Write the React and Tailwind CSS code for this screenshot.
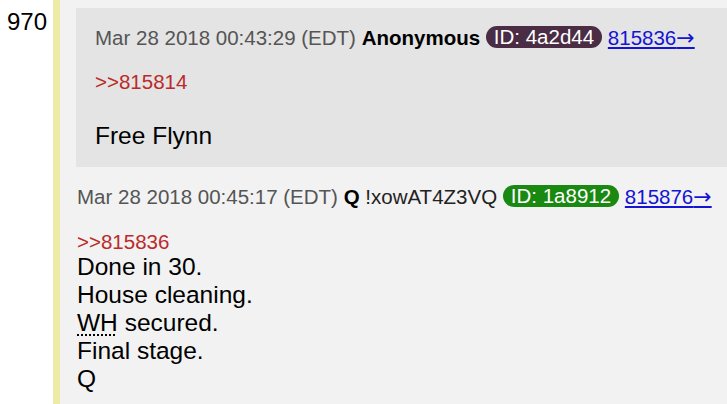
import React from 'react';

const Badge = ({ id }) => (
  <span
    className="inline-block rounded-full px-[8px] leading-[22px] text-white align-[1px]"
    style={{ backgroundColor: `#${id}` }}
  >
    ID: {id}
  </span>
);

const PostHeader = ({ date, name, trip, id, link }) => (
  <div className="text-[20.5px] leading-[23px] text-[#555555] whitespace-nowrap">
    {date}{' '}
    <span className="font-bold text-black">{name}</span>
    {trip && <span className="text-[#222222]"> {trip}</span>}{' '}
    <Badge id={id} />{' '}
    <a href="#" className="text-[#1414d2] underline">
      {link}
      <span className="font-['DejaVu_Sans',sans-serif] text-[22px]">→</span>
    </a>
  </div>
);

const Quote = ({ n }) => (
  <div className="text-[20.5px] leading-[23px] text-[#bb2a2a]">&gt;&gt;{n}</div>
);

export default function App() {
  return (
    <div className="w-[727px] h-[404px] overflow-hidden bg-white font-['Liberation_Sans',Arial,sans-serif] flex">
      {/* post number */}
      <div className="w-[53px] shrink-0 pl-[7px] pt-[8px] text-[24px] leading-[28px] text-black">970</div>
      <div className="w-[7px] shrink-0 bg-[#eeeba8]" />

      <div className="flex-1 bg-[#f2f2f2] pl-[16px] pt-[8px] min-w-0">
        {/* replied-to post */}
        <div className="bg-[#e4e4e4] pl-[19px] pt-[18px] pb-[17px]">
          <PostHeader date="Mar 28 2018 00:43:29 (EDT)" name="Anonymous" id="4a2d44" link="815836" />
          <div className="mt-[21px]">
            <Quote n="815814" />
          </div>
          <div className="mt-[29px] text-[24.5px] leading-[28px] text-black">Free Flynn</div>
        </div>

        {/* reply */}
        <div className="pl-[1px] pt-[18px]">
          <PostHeader date="Mar 28 2018 00:45:17 (EDT)" name="Q" trip="!xowAT4Z3VQ" id="1a8912" link="815876" />
          <div className="mt-[22px]">
            <Quote n="815836" />
          </div>
          <div className="text-[24.5px] leading-[28px] text-black">
            <div>Done in 30.</div>
            <div>House cleaning.</div>
            <div>
              <span className="underline decoration-dotted decoration-[2px] underline-offset-[3px]">WH</span> secured.
            </div>
            <div>Final stage.</div>
            <div>Q</div>
          </div>
        </div>
      </div>
    </div>
  );
}
